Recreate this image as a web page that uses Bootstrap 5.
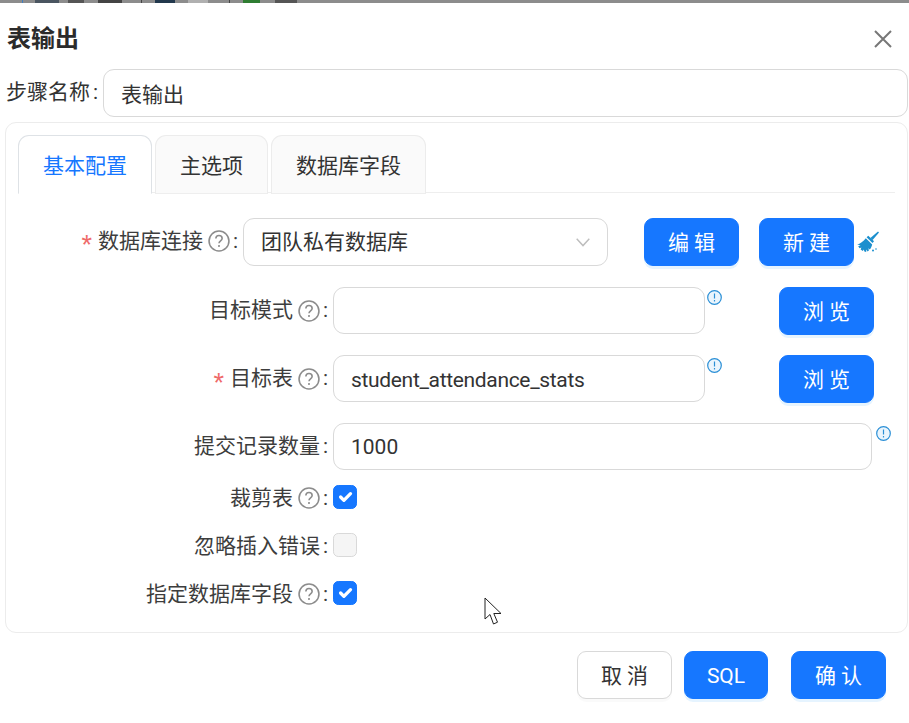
<!DOCTYPE html>
<html lang="zh-CN">

<head>
  <meta charset="UTF-8">
  <title>表输出</title>
  <meta name="viewport" content="width=device-width, initial-scale=1">
  <link href="https://cdn.jsdelivr.net/npm/bootstrap@5.3.2/dist/css/bootstrap.min.css" rel="stylesheet">
  <style>
    body {
      background-color: #fff;
      color: #333;
      font-family: Roboto, "Noto Sans CJK SC", sans-serif;
      font-size: 21px;
      line-height: 33px;
      position: relative;
      height: 723px;
      overflow: hidden;
    }

    .top-strip {
      height: 3px;
      background: linear-gradient(90deg,
          #8c8c8c 22px, #3f7fc0 22px, #3f7fc0 23px, #8c8c8c 23px,
          #8c8c8c 35px, #4a5560 35px, #4a5560 59px, #8c8c8c 59px,
          #8c8c8c 68px, #555 68px, #555 84px, #8c8c8c 84px,
          #8c8c8c 98px, #444 98px, #444 122px, #8c8c8c 122px,
          #8c8c8c 141px, #444 141px, #444 142px, #8c8c8c 142px,
          #8c8c8c 155px, #22384c 155px, #22384c 175px, #8c8c8c 175px,
          #8c8c8c 188px, #b0b0b0 188px, #b0b0b0 208px, #8c8c8c 208px,
          #8c8c8c 229px, #444 229px, #444 230px, #8c8c8c 230px,
          #8c8c8c 243px, #2f7d32 243px, #2f7d32 260px, #8c8c8c 260px,
          #8c8c8c 275px, #555 275px, #555 297px, #8c8c8c 297px);
    }

    .dialog-title {
      height: 66px;
      padding: 5px 16px 0 7px;
    }

    .dialog-title h5 {
      font-size: 24px;
      font-weight: 700;
      margin: 0 0 2px;
      color: #2b2b2b;
      font-family: "Noto Sans CJK SC", sans-serif;
    }

    .step-row {
      margin: 0 1px 5px 6px;
    }

    .step-row label {
      width: 97px;
      padding-bottom: 1px;
    }

    .colon {
      margin-left: 3px;
    }

    .form-control,
    .fake-select {
      height: 48px;
      font-size: 21px;
      line-height: 33px;
      color: #333;
      border: 1px solid #d9d9d9;
      border-radius: 11px;
      padding: 0 17px;
    }

    .field-short {
      height: 47px;
    }

    .latin-value {
      letter-spacing: -.33px;
      padding-top: 2px;
    }

    .main-card {
      margin: 0 1px 0 5px;
      height: 511px;
      padding: 12px;
      border-color: #ececec;
      border-radius: 11px;
    }

    .nav-tabs {
      gap: 3px;
      border-bottom-color: #eeeeee;
      height: 58px;
      margin-bottom: 25px;
    }

    .nav-tabs .nav-link {
      height: 59px;
      margin: 0;
      color: #333;
      background-color: #fafafa;
      border: 1px solid #ececec;
      border-bottom-color: #eeeeee;
      border-radius: 11px 11px 0 0;
      padding: 14px 24px 0;
    }

    .nav-tabs .nav-link.active {
      color: #1677ff;
      background-color: #fff;
      border-bottom-color: #fff;
    }

    .tab-pane {
      gap: 21px;
    }

    .field-row {
      height: 47px;
    }

    .field-label {
      width: 310px;
      margin-right: 5px;
      padding-bottom: 2px;
      flex-shrink: 0;
      color: #3d3d3d;
    }

    .field-label.wide-label {
      width: 220px;
    }

    .field-row .field-label {
      padding-bottom: 0;
    }

    .check-row .field-label {
      padding: 2px 0 0;
    }

    .required {
      color: #ef6a6a;
      margin-right: 6px;
      padding-top: 9px;
      font-size: 27px;
      line-height: 1;
      font-family: "Liberation Sans", sans-serif;
    }

    .help-icon {
      margin: 0 3px 0 5px;
    }

    .btn-primary,
    .btn-cancel {
      width: 95px;
      height: 48px;
      padding: 3px 0 0;
      font-size: 21px;
      border-radius: 9px;
      flex-shrink: 0;
    }

    .btn-primary {
      background-color: #1677ff;
      border-color: #1677ff;
      box-shadow: 0 3px 0 rgba(5, 145, 255, .1);
    }

    .btn-cancel {
      background-color: #fff;
      border: 1px solid #d9d9d9;
      color: #333;
      box-shadow: 0 3px 0 rgba(0, 0, 0, .02);
    }

    .btn-sql {
      width: 84px;
      margin-left: 12px;
    }

    .btn-confirm {
      margin-left: 23px;
    }

    .btn-edit {
      margin-left: 36px;
    }

    .btn-new {
      margin-left: 20px;
    }

    .broom-icon {
      margin-left: 3px;
    }

    .input-conn {
      width: 365px;
    }

    .input-mid {
      width: 372px;
    }

    .input-long {
      width: 539px;
    }

    .info-icon {
      margin: 3px 0 0 2px;
      flex-shrink: 0;
    }

    .browse-btn {
      margin-left: 57px;
    }

    .check-list {
      margin-top: 3px;
    }

    .check-row {
      height: 48px;
    }

    .form-check-input {
      width: 24px;
      height: 24px;
      margin: 0;
      border-color: #d9d9d9;
      border-radius: 6px;
      background-color: #f5f5f5;
    }

    .form-check-input:checked {
      background-color: #1677ff;
      border-color: #1677ff;
    }

    .dialog-footer {
      margin-top: 18px;
      padding-right: 23px;
    }

    .mouse-cursor {
      position: absolute;
      left: 484px;
      top: 597px;
    }
  </style>
</head>

<body>
  <div class="top-strip"></div>

  <div class="dialog-title d-flex align-items-center justify-content-between">
    <h5>表输出</h5>
    <svg width="20" height="20" viewBox="0 0 20 20" fill="none" stroke="#777" stroke-width="2">
      <path d="M2 2 18 18M18 2 2 18" />
    </svg>
  </div>

  <div class="step-row d-flex align-items-center">
    <label class="flex-shrink-0">步骤名称<span class="colon">:</span></label>
    <input class="form-control" value="表输出">
  </div>

  <div class="card main-card">
    <ul class="nav nav-tabs">
      <li class="nav-item"><a class="nav-link active" href="#">基本配置</a></li>
      <li class="nav-item"><a class="nav-link" href="#">主选项</a></li>
      <li class="nav-item"><a class="nav-link" href="#">数据库字段</a></li>
    </ul>

    <div class="tab-pane d-flex flex-column">
      <div class="d-flex align-items-center">
        <div class="field-label wide-label d-flex justify-content-end align-items-center">
          <span class="required">*</span>数据库连接
          <svg class="help-icon" width="22" height="22" viewBox="0 0 21 21">
            <circle cx="10.5" cy="10.5" r="9.5" fill="none" stroke="#8c8c8c" stroke-width="1.5" />
            <path d="M7.5 8.2c0-1.8 1.3-2.9 3-2.9s3 1.1 3 2.7c0 2.3-3 2.3-3 4.6" fill="none" stroke="#8c8c8c" stroke-width="1.5" />
            <circle cx="10.5" cy="15.3" r="1" fill="#8c8c8c" />
          </svg>:
        </div>
        <div class="fake-select input-conn d-flex align-items-center justify-content-between flex-shrink-0">
          <span>团队私有数据库</span>
          <svg width="14" height="9" viewBox="0 0 14 9" fill="none" stroke="#bdbdbd" stroke-width="1.4">
            <path d="M.7.8 7 7.6 13.3.8" />
          </svg>
        </div>
        <button class="btn btn-primary btn-edit">编 辑</button>
        <button class="btn btn-primary btn-new">新 建</button>
        <svg class="broom-icon" width="22" height="22" viewBox="0 0 22 22" fill="#1b8fce">
          <path d="M21 .5 22 1.6 15.6 9 13.4 6.9Z" />
          <path d="M9.6 6.2 11.3 4.7 17 10.3 15.5 12Z" />
          <path d="M8.8 7.2 15.2 13.4C14.6 15.5 14 17 12.8 18.6L11.4 17.3 11.9 19.4 10.6 20.4 9.2 18.6 9.2 21 7.4 20.6 6.8 18.4 5.8 20 3.6 18.4 4.4 16.6 2.6 17.3 1.2 15.2 3.6 14.2 .2 13.4C3 12.7 6.4 10.6 8.8 7.2Z" />
          <circle cx="16" cy="19.5" r="1" />
          <circle cx="19" cy="18" r=".8" />
        </svg>
      </div>

      <div class="field-row d-flex align-items-start">
        <div class="field-label d-flex justify-content-end align-items-center field-short">
          目标模式
          <svg class="help-icon" width="22" height="22" viewBox="0 0 21 21">
            <circle cx="10.5" cy="10.5" r="9.5" fill="none" stroke="#8c8c8c" stroke-width="1.5" />
            <path d="M7.5 8.2c0-1.8 1.3-2.9 3-2.9s3 1.1 3 2.7c0 2.3-3 2.3-3 4.6" fill="none" stroke="#8c8c8c" stroke-width="1.5" />
            <circle cx="10.5" cy="15.3" r="1" fill="#8c8c8c" />
          </svg>:
        </div>
        <input class="form-control input-mid field-short flex-shrink-0" value="">
        <svg class="info-icon" width="15" height="15" viewBox="0 0 15 15">
          <circle cx="7.5" cy="7.5" r="6.8" fill="#eaf5fd" stroke="#2a8fd6" stroke-width="1.2" />
          <path d="M7.5 3.4v5.2M7.5 10v1.4" stroke="#2a8fd6" stroke-width="1.2" />
        </svg>
        <button class="btn btn-primary browse-btn">浏 览</button>
      </div>

      <div class="field-row d-flex align-items-start">
        <div class="field-label d-flex justify-content-end align-items-center field-short">
          <span class="required">*</span>目标表
          <svg class="help-icon" width="22" height="22" viewBox="0 0 21 21">
            <circle cx="10.5" cy="10.5" r="9.5" fill="none" stroke="#8c8c8c" stroke-width="1.5" />
            <path d="M7.5 8.2c0-1.8 1.3-2.9 3-2.9s3 1.1 3 2.7c0 2.3-3 2.3-3 4.6" fill="none" stroke="#8c8c8c" stroke-width="1.5" />
            <circle cx="10.5" cy="15.3" r="1" fill="#8c8c8c" />
          </svg>:
        </div>
        <input class="form-control input-mid field-short latin-value flex-shrink-0" value="student_attendance_stats">
        <svg class="info-icon" width="15" height="15" viewBox="0 0 15 15">
          <circle cx="7.5" cy="7.5" r="6.8" fill="#eaf5fd" stroke="#2a8fd6" stroke-width="1.2" />
          <path d="M7.5 3.4v5.2M7.5 10v1.4" stroke="#2a8fd6" stroke-width="1.2" />
        </svg>
        <button class="btn btn-primary browse-btn">浏 览</button>
      </div>

      <div class="field-row d-flex align-items-start">
        <div class="field-label d-flex justify-content-end align-items-center field-short">提交记录数量<span class="colon">:</span></div>
        <input class="form-control input-long field-short flex-shrink-0" value="1000">
        <svg class="info-icon ms-1" width="15" height="15" viewBox="0 0 15 15">
          <circle cx="7.5" cy="7.5" r="6.8" fill="#eaf5fd" stroke="#2a8fd6" stroke-width="1.2" />
          <path d="M7.5 3.4v5.2M7.5 10v1.4" stroke="#2a8fd6" stroke-width="1.2" />
        </svg>
      </div>
    </div>

    <div class="check-list">
      <div class="check-row d-flex align-items-center">
        <div class="field-label d-flex justify-content-end align-items-center">
          裁剪表
          <svg class="help-icon" width="22" height="22" viewBox="0 0 21 21">
            <circle cx="10.5" cy="10.5" r="9.5" fill="none" stroke="#8c8c8c" stroke-width="1.5" />
            <path d="M7.5 8.2c0-1.8 1.3-2.9 3-2.9s3 1.1 3 2.7c0 2.3-3 2.3-3 4.6" fill="none" stroke="#8c8c8c" stroke-width="1.5" />
            <circle cx="10.5" cy="15.3" r="1" fill="#8c8c8c" />
          </svg>:
        </div>
        <input class="form-check-input" type="checkbox" checked>
      </div>
      <div class="check-row d-flex align-items-center">
        <div class="field-label d-flex justify-content-end align-items-center">忽略插入错误<span class="colon">:</span></div>
        <input class="form-check-input" type="checkbox">
      </div>
      <div class="check-row d-flex align-items-center">
        <div class="field-label d-flex justify-content-end align-items-center">
          指定数据库字段
          <svg class="help-icon" width="22" height="22" viewBox="0 0 21 21">
            <circle cx="10.5" cy="10.5" r="9.5" fill="none" stroke="#8c8c8c" stroke-width="1.5" />
            <path d="M7.5 8.2c0-1.8 1.3-2.9 3-2.9s3 1.1 3 2.7c0 2.3-3 2.3-3 4.6" fill="none" stroke="#8c8c8c" stroke-width="1.5" />
            <circle cx="10.5" cy="15.3" r="1" fill="#8c8c8c" />
          </svg>:
        </div>
        <input class="form-check-input" type="checkbox" checked>
      </div>
    </div>
  </div>

  <div class="dialog-footer d-flex justify-content-end">
    <button class="btn btn-cancel">取 消</button>
    <button class="btn btn-primary btn-sql">SQL</button>
    <button class="btn btn-primary btn-confirm">确 认</button>
  </div>

  <svg class="mouse-cursor" width="20" height="29" viewBox="0 0 20 29">
    <path d="M1 1V22L6 17.5 9.5 27 13.5 25.2 9.8 16.5 17 16.5Z" fill="#fff" stroke="#222" stroke-width="1" />
  </svg>

  <script src="https://cdn.jsdelivr.net/npm/bootstrap@5.3.2/dist/js/bootstrap.bundle.min.js"></script>
</body>

</html>
